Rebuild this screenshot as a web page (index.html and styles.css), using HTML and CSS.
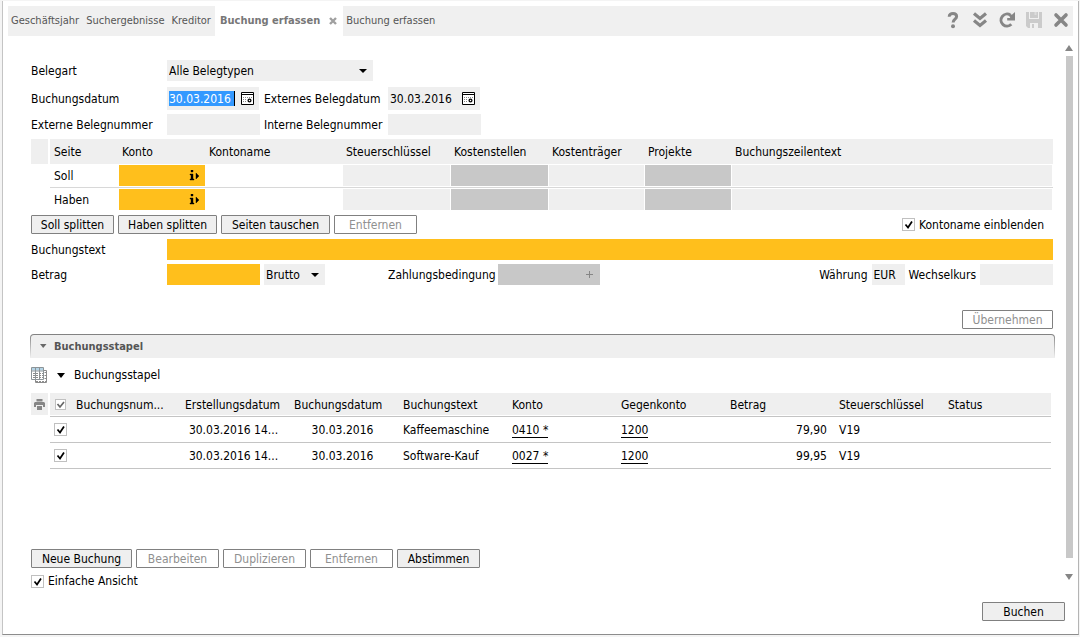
FILE: index.html
```html
<!DOCTYPE html>
<html lang="de">
<head>
<meta charset="utf-8">
<title>Buchung erfassen</title>
<link rel="stylesheet" href="styles.css">
</head>
<body>
<div class="window">
  <header class="topbar">
    <nav class="tabs">
      <a class="tab" href="#">Geschäftsjahr</a>
      <a class="tab" href="#">Suchergebnisse</a>
      <a class="tab" href="#">Kreditor</a>
      <span class="tab tab-active"><a href="#">Buchung erfassen</a>
        <button class="icon-button" type="button" aria-label="Tab schließen"><svg width="8" height="8" viewBox="0 0 8 8"><path d="M1 1l6 6M7 1L1 7" stroke="#a0a0a0" stroke-width="2.4"/></svg></button>
      </span>
      <a class="tab" href="#">Buchung erfassen</a>
    </nav>
    <div class="tools">
      <button class="icon-button" type="button" aria-label="Hilfe"><svg width="18" height="18" viewBox="0 0 18 18"><path d="M5.200 5.800C5.200 3.200 7 2.500 9 2.500c2.300 0 3.600 1.100 3.600 3 0 2.600-3.500 2.700-3.500 6" fill="none" stroke="#868686" stroke-width="3"/><circle cx="9" cy="15.200" r="2" fill="#868686"/></svg></button>
      <button class="icon-button" type="button" aria-label="Mehr"><svg width="18" height="18" viewBox="0 0 18 18"><path d="M3 2.500l6 5 6-5M3 9.500l6 5 6-5" fill="none" stroke="#868686" stroke-width="3.200"/></svg></button>
      <button class="icon-button" type="button" aria-label="Aktualisieren"><svg width="18" height="18" viewBox="0 0 18 18"><path d="M12.500 4.200A6 6 0 1 0 13.300 13.300" fill="none" stroke="#868686" stroke-width="3"/><path d="M17 1v8.500H9.200V7h3l-1-3 3-.5z" fill="#868686"/></svg></button>
      <button class="icon-button" type="button" aria-label="Speichern" disabled><svg width="18" height="18" viewBox="0 0 18 18"><path d="M1 1h3v7h10V1h3v16H13v-5H5v5H3l-2-2z" fill="#cbcbcb"/><path d="M5 1h8v6H5z" fill="#cbcbcb"/><path d="M9.500 1h2v3h-2z" fill="#dcdcdc"/><path d="M7 13h2v4H7z" fill="#cbcbcb"/></svg></button>
      <button class="icon-button" type="button" aria-label="Schließen"><svg width="18" height="18" viewBox="0 0 18 18"><path d="M4 4l10 10M14 4L4 14" stroke="#868686" stroke-width="3.600" stroke-linecap="round"/></svg></button>
    </div>
  </header>

  <div class="body">
    <main class="content">
      <div class="row">
        <label class="label" for="belegart">Belegart</label>
        <select class="field select select-wide" id="belegart"><option>Alle Belegtypen</option></select>
      </div>
      <div class="row row-dates">
        <label class="label" for="bdatum">Buchungsdatum</label>
        <span class="date"><input class="date-input date-selected" id="bdatum" type="text" value="30.03.2016"><button class="icon-button" type="button" aria-label="Kalender"><svg width="13" height="13" viewBox="0 0 13 13"><path d="M.5.5h12v12H.5zM0 2.500h13" fill="#fff" stroke="#000"/><path d="M2 5.500h9M2 7.500h4M2 9.500h4" stroke="#888" stroke-dasharray="1 1"/><circle cx="8.500" cy="8.500" r="1.400" fill="#fff" stroke="#000" stroke-width="1.300"/></svg></button></span>
        <label class="label label-second" for="exdatum">Externes Belegdatum</label>
        <span class="date"><input class="date-input" id="exdatum" type="text" value="30.03.2016"><button class="icon-button" type="button" aria-label="Kalender"><svg width="13" height="13" viewBox="0 0 13 13"><path d="M.5.5h12v12H.5zM0 2.500h13" fill="#fff" stroke="#000"/><path d="M2 5.500h9M2 7.500h4M2 9.500h4" stroke="#888" stroke-dasharray="1 1"/><circle cx="8.500" cy="8.500" r="1.400" fill="#fff" stroke="#000" stroke-width="1.300"/></svg></button></span>
      </div>
      <div class="row">
        <label class="label" for="exnr">Externe Belegnummer</label>
        <input class="field" id="exnr" type="text">
        <label class="label label-second" for="innr">Interne Belegnummer</label>
        <input class="field" id="innr" type="text">
      </div>

      <table class="grid entry">
        <colgroup><col class="c-mark"><col class="c-side"><col class="c-konto"><col class="c-name"><col class="c-tax"><col class="c-center"><col class="c-carrier"><col class="c-konto"><col></colgroup>
        <thead>
          <tr><th class="mark"></th><th>Seite</th><th>Konto</th><th>Kontoname</th><th>Steuerschlüssel</th><th>Kostenstellen</th><th>Kostenträger</th><th>Projekte</th><th>Buchungszeilentext</th></tr>
        </thead>
        <tbody>
          <tr><td></td><td class="side">Soll</td>
            <td><span class="lookup"><input class="cell required" type="text" aria-label="Konto Soll"><svg width="11" height="11" viewBox="0 0 11 11"><path d="M2 0h2v2H2zM1 4h3v5h1v1H1V9h1V5H1zM7 3l3 3-3 3z" stroke="#000" stroke-width=".4"/></svg></span></td>
            <td></td>
            <td><input class="cell" type="text" aria-label="Steuerschlüssel Soll"></td>
            <td><input class="cell locked" type="text" aria-label="Kostenstellen Soll" disabled></td>
            <td><input class="cell" type="text" aria-label="Kostenträger Soll"></td>
            <td><input class="cell locked" type="text" aria-label="Projekte Soll" disabled></td>
            <td><input class="cell" type="text" aria-label="Buchungszeilentext Soll"></td></tr>
          <tr><td></td><td class="side">Haben</td>
            <td><span class="lookup"><input class="cell required" type="text" aria-label="Konto Haben"><svg width="11" height="11" viewBox="0 0 11 11"><path d="M2 0h2v2H2zM1 4h3v5h1v1H1V9h1V5H1zM7 3l3 3-3 3z" stroke="#000" stroke-width=".4"/></svg></span></td>
            <td></td>
            <td><input class="cell" type="text" aria-label="Steuerschlüssel Haben"></td>
            <td><input class="cell locked" type="text" aria-label="Kostenstellen Haben" disabled></td>
            <td><input class="cell" type="text" aria-label="Kostenträger Haben"></td>
            <td><input class="cell locked" type="text" aria-label="Projekte Haben" disabled></td>
            <td><input class="cell" type="text" aria-label="Buchungszeilentext Haben"></td></tr>
        </tbody>
      </table>

      <div class="row actions">
        <button class="button" type="button">Soll splitten</button>
        <button class="button button-medium" type="button">Haben splitten</button>
        <button class="button button-wide" type="button">Seiten tauschen</button>
        <button class="button" type="button" disabled>Entfernen</button>
        <label class="check-label push"><input class="check" type="checkbox" checked>Kontoname einblenden</label>
      </div>
      <div class="row">
        <label class="label" for="btext">Buchungstext</label>
        <input class="field required fill" id="btext" type="text">
      </div>
      <div class="row">
        <label class="label" for="betrag">Betrag</label>
        <input class="field required" id="betrag" type="text">
        <select class="field select select-small" aria-label="Brutto oder Netto"><option>Brutto</option></select>
        <label class="label-terms" for="zahlung">Zahlungsbedingung</label>
        <span class="terms"><input id="zahlung" type="text" disabled><svg width="7" height="7" viewBox="0 0 7 7"><path d="M3.500 0v7M0 3.500h7" stroke="#868686"/></svg></span>
        <label class="push" for="waehrung">Währung</label>
        <input class="field currency" id="waehrung" type="text" value="EUR">
        <label class="label-rate" for="kurs">Wechselkurs</label>
        <input class="field rate" id="kurs" type="text">
      </div>
      <div class="row apply">
        <button class="button button-apply push" type="button" disabled>Übernehmen</button>
      </div>

      <h2 class="section"><svg width="8" height="5" viewBox="0 0 8 5"><path d="M1 0h6.500L4.200 4z" fill="#686868"/></svg>Buchungsstapel</h2>

      <div class="stack-bar">
        <svg width="17" height="17" viewBox="0 0 17 17"><path d="M4.500 3.500h11v12h-11z" fill="#fff" stroke="#8c8c8c"/><path d="M.5.5h12v12H.5z" fill="#fff" stroke="#8c9498"/><path d="M1 1h11v2.500H1z" fill="#b4d4e6"/><path d="M.5 4h12M4.500 1v12M8.500 1v12" stroke="#8c9498"/><path d="M2 6.500h10M2 8.500h10M2 10.500h10M13.500 5.500h2M13.500 8.500h2M13.500 11.500h2M5 14.500h10" stroke="#8c8c8c" stroke-dasharray="2 1"/></svg>
        <svg width="8" height="5" viewBox="0 0 8 5"><path d="M0 0h8L4 5z"/></svg>
        <span>Buchungsstapel</span>
      </div>

      <table class="grid stack">
        <colgroup><col class="c-mark"><col class="c-check"><col class="c-std"><col class="c-std"><col class="c-std"><col class="c-std"><col class="c-std"><col class="c-std"><col class="c-std"><col class="c-std"><col></colgroup>
        <thead>
          <tr><th class="mark"><svg width="11" height="11" viewBox="0 0 11 11"><path d="M2.500 0h6v2.500h-6zM1 3h9l1 1v4H9V6H2v2H0V4zM3 7h5v4H3z" fill="#868686"/></svg></th><th><input class="check check-head" type="checkbox" aria-label="Alle auswählen" checked></th><th>Buchungsnum...</th><th>Erstellungsdatum</th><th>Buchungsdatum</th><th>Buchungstext</th><th>Konto</th><th>Gegenkonto</th><th>Betrag</th><th>Steuerschlüssel</th><th>Status</th></tr>
        </thead>
        <tbody>
          <tr><td></td><td><input class="check" type="checkbox" aria-label="Kaffeemaschine auswählen" checked></td><td></td><td class="center">30.03.2016 14...</td><td class="center">30.03.2016</td><td>Kaffeemaschine</td><td><a href="#">0410 *</a></td><td><a href="#">1200</a></td><td class="amount">79,90</td><td>V19</td><td></td></tr>
          <tr><td></td><td><input class="check" type="checkbox" aria-label="Software-Kauf auswählen" checked></td><td></td><td class="center">30.03.2016 14...</td><td class="center">30.03.2016</td><td>Software-Kauf</td><td><a href="#">0027 *</a></td><td><a href="#">1200</a></td><td class="amount">99,95</td><td>V19</td><td></td></tr>
        </tbody>
      </table>

      <div class="row stack-actions">
        <button class="button button-new" type="button">Neue Buchung</button>
        <button class="button" type="button" disabled>Bearbeiten</button>
        <button class="button" type="button" disabled>Duplizieren</button>
        <button class="button" type="button" disabled>Entfernen</button>
        <button class="button" type="button">Abstimmen</button>
      </div>
      <label class="check-label"><input class="check" type="checkbox" checked>Einfache Ansicht</label>
    </main>
    <div class="scrollbar" aria-hidden="true">
      <svg width="8" height="6" viewBox="0 0 8 6"><path d="M0 6h8L4 0z" fill="#868686"/></svg>
      <div class="thumb"></div>
      <svg width="8" height="6" viewBox="0 0 8 6"><path d="M0 0h8L4 6z" fill="#868686"/></svg>
    </div>
  </div>

  <footer class="footer"><button class="button" type="button">Buchen</button></footer>
</div>
</body>
</html>
```
FILE: styles.css
```css
* { box-sizing: border-box; }

body {
  margin: 0;
  padding: 1px 1px 2px 2px;
  min-height: 100vh;
  display: flex;
  background: #f4f4f4;
  color: #000;
  font: 12px/16px "DejaVu Sans Condensed", "Noto Sans", sans-serif;
}

input, select, button { font: inherit; color: inherit; margin: 0; border: 0; border-radius: 0; }

.window {
  flex: 1;
  min-width: 0;
  display: flex;
  flex-direction: column;
  padding: 5px 5px 13px;
  background: #fff;
  border-left: 1px solid #c4c4c4;
  border-right: 1px solid #b4b4b4;
  border-bottom: 1px solid #8c8c8c;
}

.topbar {
  display: flex;
  justify-content: space-between;
  height: 30px;
  background: #f0f0f0;
}

.tabs { display: flex; font-size: 11px; }
.tab { display: flex; align-items: center; padding: 0 4px 1px 3px; color: #555; text-decoration: none; white-space: nowrap; }
.tab a { color: #777; text-decoration: none; }
.tab-active { gap: 9px; padding-left: 5px; padding-right: 6px; background: #fff; font-weight: bold; }

.tools { display: flex; align-items: center; gap: 9px; padding: 0 3px 2px 0; }
.icon-button { display: block; padding: 0; background: none; }
.icon-button svg, .scrollbar svg { display: block; }

.body { flex: 1; display: flex; gap: 12px; padding-top: 9px; }
.content { flex: 1; min-width: 0; display: flex; flex-direction: column; gap: 4px; padding: 15px 0 0 23px; }

.row { display: flex; align-items: center; min-height: 21px; }
.row-dates { padding-top: 2px; }
.label { width: 136px; white-space: nowrap; }
.label-second { width: 124px; margin-left: 4px; }
.push { margin-left: auto; }

.field { width: 93px; height: 21px; padding: 0 2px; background-color: #efefef; }
.fill { flex: 1; }
.required { background-color: #ffbf1c; }

.select {
  appearance: none;
  background-image: url("data:image/svg+xml,%3Csvg xmlns='http://www.w3.org/2000/svg' width='8' height='4'%3E%3Cpath d='M0 0h8L4 4z'/%3E%3C/svg%3E");
  background-repeat: no-repeat;
  background-position: right 6px center;
}
.select-wide { width: 206px; }
.select-small { width: 61px; margin-left: 4px; }

.date { display: flex; align-items: center; justify-content: space-between; width: 92px; height: 23px; padding: 0 5px 0 2px; background: #efefef; }
.date + .label-second { margin-left: 5px; }
.date-input { width: 66px; height: 15px; padding: 0; background: none; }
.date-selected { background: #3399ff; color: #fff; border-right: 1px solid #000; }

.grid { width: 100%; table-layout: fixed; border-collapse: separate; border-spacing: 0; }
.grid th { padding: 0 3px; background: #efefef; font-weight: normal; text-align: left; white-space: nowrap; }
.grid td { padding: 0 3px; white-space: nowrap; }
.grid .mark { padding: 0; border-right: 2px solid #fff; text-align: center; }
.grid .check, .mark svg { display: block; margin: 0 auto; }

.c-mark { width: 19px; }
.c-side { width: 69px; }
.c-konto { width: 87px; }
.c-name { width: 137px; }
.c-tax { width: 108px; }
.c-center { width: 98px; }
.c-carrier { width: 96px; }
.c-check { width: 23px; }
.c-std { width: 109px; }

.entry th { height: 25px; }
.entry td { height: 24px; padding: 1px 1px 1px 0; }
.entry .side, .entry th:nth-child(2) { padding-left: 4px; }
.entry tbody tr:first-child td { border-bottom: 1px solid #d8d8d8; }
.entry tbody tr:first-child td:first-child { border-bottom-color: #fff; }
.entry tbody tr:last-child td { padding-bottom: 2px; }
.cell { display: block; width: 100%; height: 21px; padding: 0 2px; background-color: #efefef; }
.locked { background-color: #c8c8c8; }
.cell.required { background-color: #ffbf1c; }
.lookup { display: grid; align-items: center; }
.lookup > * { grid-area: 1 / 1; }
.lookup svg { justify-self: end; margin-right: 5px; }

.button {
  min-width: 83px;
  height: 19px;
  padding: 0 4px;
  background: #efefef;
  border: 1px solid #808080;
  border-radius: 1px;
  line-height: 16px;
  white-space: nowrap;
}
.button:disabled { background: #fff; color: #909090; }
.button-medium { min-width: 99px; }
.button-wide { min-width: 109px; }
.button-apply { min-width: 91px; }
.button-new { min-width: 101px; }

.actions, .stack-actions { gap: 4px; }
.actions { margin-top: -2px; }
.actions .check-label { padding-right: 9px; }

.check-label { display: flex; align-items: center; gap: 4px; }
.check {
  appearance: none;
  width: 13px;
  height: 13px;
  background: #fff;
  border: 1px solid #c0c0c0;
}
.check:checked {
  background-image: url("data:image/svg+xml,%3Csvg xmlns='http://www.w3.org/2000/svg' width='11' height='11'%3E%3Cpath d='M2.500 5.500l2.500 3 4-6' fill='none' stroke='%23000' stroke-width='1.700'/%3E%3C/svg%3E");
}
.check-head:checked {
  width: 11px;
  height: 11px;
  background-image: url("data:image/svg+xml,%3Csvg xmlns='http://www.w3.org/2000/svg' width='9' height='9'%3E%3Cpath d='M1.500 4l2.500 3 4-5' fill='none' stroke='%23666' stroke-width='1.700'/%3E%3C/svg%3E");
}

.label-terms { margin: 0 2px 0 63px; }
.terms { display: flex; align-items: center; width: 102px; height: 21px; padding-right: 7px; background: #c8c8c8; }
.terms input { flex: 1; min-width: 0; background: none; }
.currency { width: 33px; margin: 0 4px; }
.rate { width: 73px; margin-left: 4px; }

.apply { margin-top: 20px; }

.section {
  display: flex;
  align-items: center;
  gap: 7px;
  height: 24px;
  margin: 0 -2px 0 -1px;
  padding-left: 8px;
  background:
    linear-gradient(#efefef, #efefef) padding-box,
    linear-gradient(#808080, #efefef) border-box;
  border: solid transparent;
  border-width: 1px 1px 0;
  border-radius: 4px 4px 0 0;
  color: #555;
  font-size: 11px;
}

.stack-bar { display: flex; align-items: center; height: 18px; margin: 4px 0 5px; gap: 9px; }

.stack { width: calc(100% - 2px); }
.stack th { height: 24px; border-bottom: 1px solid #c4c4c4; box-shadow: inset 0 -1px #fff; }
.stack th.mark { border-bottom-color: #fff; }
.stack td { height: 26px; border-bottom: 1px solid #c4c4c4; }
.stack td:first-child { border-bottom-color: #fff; }
.stack .center { padding-right: 9px; text-align: center; }
.stack .amount { padding-right: 9px; text-align: right; }
.stack th:nth-child(2), .stack td:nth-child(2) { padding: 0 2px 0 0; }
.stack a { color: #000; text-decoration: none; border-bottom: 1px solid #000; }

.stack-actions { margin-top: 75px; }

.scrollbar { width: 8px; display: flex; flex-direction: column; align-items: center; padding-bottom: 10px; }
.thumb { flex: 1; width: 7px; margin: 5px 0 16px; background: #c8c8c8; }

.footer { display: flex; justify-content: flex-end; padding: 12px 8px 0 0; }
```
